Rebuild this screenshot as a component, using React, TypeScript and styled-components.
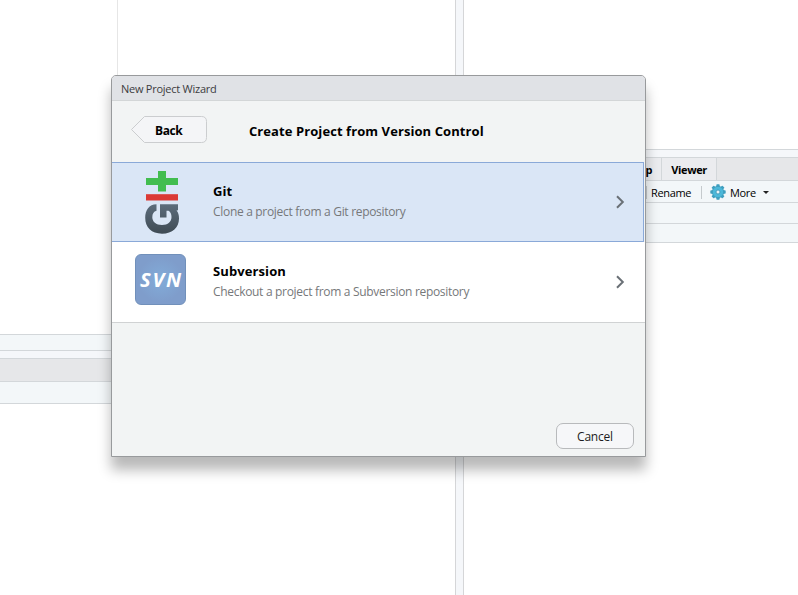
import React from "react";
import styled, { createGlobalStyle } from "styled-components";

const Global = createGlobalStyle`
  * { box-sizing: border-box; }
  body { margin: 0; overflow: hidden; background: #fff; font-family: "Open Sans", "Noto Sans", sans-serif; }
`;

const Screen = styled.div`
  position: relative;
  width: 798px;
  height: 595px;
  overflow: hidden;
  display: flex;
  background: #fff;
`;

const Column = styled.div<{ $width: number }>`
  flex: 0 0 ${(p) => p.$width}px;
  display: flex;
  flex-direction: column;
`;

const Splitter = styled.div`
  flex: 0 0 9px;
  background: #f5f7fa;
  border: solid #d5d6d8;
  border-width: 0 1px;
`;

const Editor = styled.div`
  flex: 0 0 334px;
  margin-left: 117px;
  border-left: 1px solid #e6e6e6;
`;

const Blank = styled.div<{ $height: number }>`
  flex: 0 0 ${(p) => p.$height}px;
`;

const Strip = styled.div<{ $height: number; $bg: string }>`
  flex: 0 0 ${(p) => p.$height}px;
  min-height: 0;
  background: ${(p) => p.$bg};
  border-top: 1px solid #d3d7da;
`;

const TabBar = styled(Strip)`
  height: ${(p) => p.$height}px;
  display: flex;
`;

const Tab = styled.div<{ $width: number }>`
  width: ${(p) => p.$width}px;
  height: 22px;
  background: #ebecef;
  border-right: 1px solid #d3d7da;
  font-size: 11px;
  font-weight: 700;
  line-height: 24px;
  text-align: right;
  padding-right: 9px;
  letter-spacing: -0.35px;
`;

const Toolbar = styled(Strip)`
  display: flex;
  align-items: center;
  padding: 1px 0 0 182px;
  font-size: 11px;
`;

const ToolLabel = styled.span<{ $width: number }>`
  width: ${(p) => p.$width}px;
  white-space: nowrap;
  letter-spacing: -0.35px;
`;

const ToolDivider = styled.div<{ $gap: number }>`
  width: 1px;
  height: 13px;
  margin-right: ${(p) => p.$gap}px;
  background: #c5cacd;
`;

const Gear = styled.svg`
  width: 16px;
  height: 16px;
  margin: -1px 4px 0 0;
`;

const Caret = styled.div`
  border: solid transparent;
  border-width: 3px 3px 0;
  border-top-color: #222;
`;

const Dialog = styled.div`
  position: absolute;
  left: 111px;
  top: 75px;
  width: 535px;
  height: 382px;
  display: flex;
  flex-direction: column;
  border: 1px solid #989a9c;
  border-radius: 5px 5px 0 0;
  background: #f2f4f4;
  box-shadow: 0 13px 13px rgba(0, 0, 0, 0.28);
`;

const TitleBar = styled.div`
  flex: 0 0 25px;
  min-height: 0;
  padding-left: 9px;
  background: #e0e2e6;
  border-bottom: 1px solid #d3d6d7;
  border-radius: 4px 4px 0 0;
  font-size: 11px;
  line-height: 26px;
  color: #3c3c3e;
  letter-spacing: -0.25px;
`;

const Header = styled.div`
  flex: 0 0 61px;
  display: flex;
  align-items: flex-start;
  padding: 14px 0 0 18px;
`;

const BackButton = styled.div`
  position: relative;
  width: 78px;
  height: 29px;
  font-size: 12px;
  font-weight: 700;
  line-height: 31px;
  padding-left: 25px;
  letter-spacing: -0.4px;
`;

const BackShape = styled.svg`
  position: absolute;
  left: 0;
  top: 0;
`;

const BackLabel = styled.span`
  position: relative;
`;

const Heading = styled.div`
  margin-left: 41px;
  font-size: 13px;
  font-weight: 700;
  line-height: 32px;
  letter-spacing: 0.08px;
`;

const Row = styled.div<{ $active?: boolean }>`
  flex: 0 0 ${(p) => (p.$active ? 80 : 81)}px;
  width: ${(p) => (p.$active ? 532 : 533)}px;
  display: flex;
  background: ${(p) => (p.$active ? "#dae6f6" : "#fff")};
  border: 0 solid ${(p) => (p.$active ? "#8aa9d8" : "#d0d2d3")};
  border-width: ${(p) => (p.$active ? "1px 1px 1px 0" : "0 0 1px")};
`;

const IconCell = styled.div`
  flex: 0 0 101px;
  padding-left: 23px;
`;

const RowText = styled.div<{ $top: number }>`
  flex: 1;
  padding-top: ${(p) => p.$top}px;
`;

const RowTitle = styled.div`
  font-size: 13px;
  font-weight: 700;
  line-height: 20px;
  letter-spacing: 0.1px;
`;

const RowDetail = styled.div`
  margin-top: 1px;
  font-size: 12px;
  line-height: 20px;
  color: #76787a;
  letter-spacing: -0.31px;
`;

const Chevron = styled.svg<{ $right: number }>`
  width: 10px;
  height: 14px;
  align-self: center;
  margin-right: ${(p) => p.$right}px;
`;

const SvnTile = styled.div`
  width: 51px;
  height: 51px;
  margin-top: 12px;
  border: 1px solid #7190ba;
  border-radius: 6px;
  background: radial-gradient(circle, #82acd9 0%, #7f9dcb 65%);
  color: #fff;
  font: italic 700 20px/50px "Open Sans", sans-serif;
  padding-left: 4px;
  letter-spacing: 1.8px;
`;

const GitMark = styled.svg`
  display: block;
  width: 55px;
  height: 70px;
  margin-top: 4px;
`;

const Footer = styled.div`
  flex: 1;
  display: flex;
  justify-content: flex-end;
  align-items: flex-end;
  padding: 0 11px 7px 0;
`;

const CancelButton = styled.div`
  width: 78px;
  height: 26px;
  border: 1px solid #b8babc;
  border-radius: 7px;
  background: #f6f7f9;
  font-size: 12px;
  line-height: 26px;
  text-align: center;
  color: #1c1c22;
  letter-spacing: -0.2px;
`;

const ChevronIcon = ({ right }: { right: number }) => (
  <Chevron $right={right} viewBox="0 0 10 14">
    <path d="M2 1.200 7.800 7 2 12.800" fill="none" stroke="#6a7076" strokeWidth="2" />
  </Chevron>
);

const GitIcon = () => (
  <GitMark viewBox="135 167 55 70">
    <defs>
      <linearGradient id="slate" x1="0" y1="0" x2="0" y2="1">
        <stop offset="0" stopColor="#5c6c7b" />
        <stop offset="1" stopColor="#3f4b54" />
      </linearGradient>
    </defs>
    <path d="M158 171h8v7h12v7h-12v6.500h-8v-6.500h-12v-7h12z" fill="#42bd4f" />
    <rect x="146" y="194.200" width="32" height="6.300" fill="#db3a35" />
    <path
      d="M156.500 204.300C149 204.300 145.200 210.500 145.200 217.800C145.200 227.500 151.500 233.700 162 233.700C172.500 233.700 179 227.500 179 218.500C179 215 178.300 212.500 176.500 210.500L178 210.300V204.300H160V217.500H166.500V210.800H168.500C170.500 212 171.500 214 171.500 217C171.500 221.500 168 225 162 225C156 225 152.300 221.800 152.300 217.300C152.300 213.800 153.800 211.600 156.500 210.800Z"
      fill="url(#slate)"
    />
  </GitMark>
);

const GearIcon = () => (
  <Gear viewBox="-8 -8 16 16">
    {[0, 45, 90, 135].map((a) => (
      <rect key={a} x="-1.700" y="-7.700" width="3.400" height="15.400" rx="0.800" fill="#3f9fbf" transform={`rotate(${a})`} />
    ))}
    <circle r="5.700" fill="#4cb8d9" stroke="#3b9bbb" strokeWidth="0.800" />
    <circle r="2" fill="#e8f3f7" stroke="#3a92b2" strokeWidth="0.800" />
  </Gear>
);

export default function App() {
  return (
    <>
      <Global />
      <Screen>
        <Column $width={455}>
          <Editor />
          <Strip $height={16} $bg="#f3f7f9" />
          <Strip $height={8} $bg="#f5f7fa" />
          <Strip $height={23} $bg="#e6e7e9" />
          <Strip $height={22} $bg="#f3f7f9" />
          <Strip $height={1} $bg="#fff" />
        </Column>
        <Splitter />
        <Column $width={334}>
          <Blank $height={149} />
          <Strip $height={8} $bg="#f5f7fa" />
          <TabBar $height={23} $bg="#e6e7e9">
            <Tab $width={198}>Help</Tab>
            <Tab $width={55}>Viewer</Tab>
          </TabBar>
          <Toolbar $height={22} $bg="#f3f7f9">
            <ToolDivider $gap={4} />
            <ToolLabel $width={50}>Rename</ToolLabel>
            <ToolDivider $gap={8} />
            <GearIcon />
            <ToolLabel $width={33}>More</ToolLabel>
            <Caret />
          </Toolbar>
          <Strip $height={21} $bg="#f3f7f9" />
          <Strip $height={19} $bg="#f3f7f9" />
          <Strip $height={1} $bg="#fff" />
        </Column>

        <Dialog>
          <TitleBar>New Project Wizard</TitleBar>
          <Header>
            <BackButton>
              <BackShape width="78" height="29">
                <path d="M1.500 14.500 14.500 1.500H71.500Q76.500 1.500 76.500 6.500V22.500Q76.500 27.500 71.500 27.500H14.500Z" fill="#f4f5f7" stroke="#cbcdcf" />
              </BackShape>
              <BackLabel>Back</BackLabel>
            </BackButton>
            <Heading>Create Project from Version Control</Heading>
          </Header>
          <Row $active>
            <IconCell>
              <GitIcon />
            </IconCell>
            <RowText $top={18}>
              <RowTitle>Git</RowTitle>
              <RowDetail>Clone a project from a Git repository</RowDetail>
            </RowText>
            <ChevronIcon right={18} />
          </Row>
          <Row>
            <IconCell>
              <SvnTile>SVN</SvnTile>
            </IconCell>
            <RowText $top={19}>
              <RowTitle>Subversion</RowTitle>
              <RowDetail>Checkout a project from a Subversion repository</RowDetail>
            </RowText>
            <ChevronIcon right={20} />
          </Row>
          <Footer>
            <CancelButton>Cancel</CancelButton>
          </Footer>
        </Dialog>
      </Screen>
    </>
  );
}
